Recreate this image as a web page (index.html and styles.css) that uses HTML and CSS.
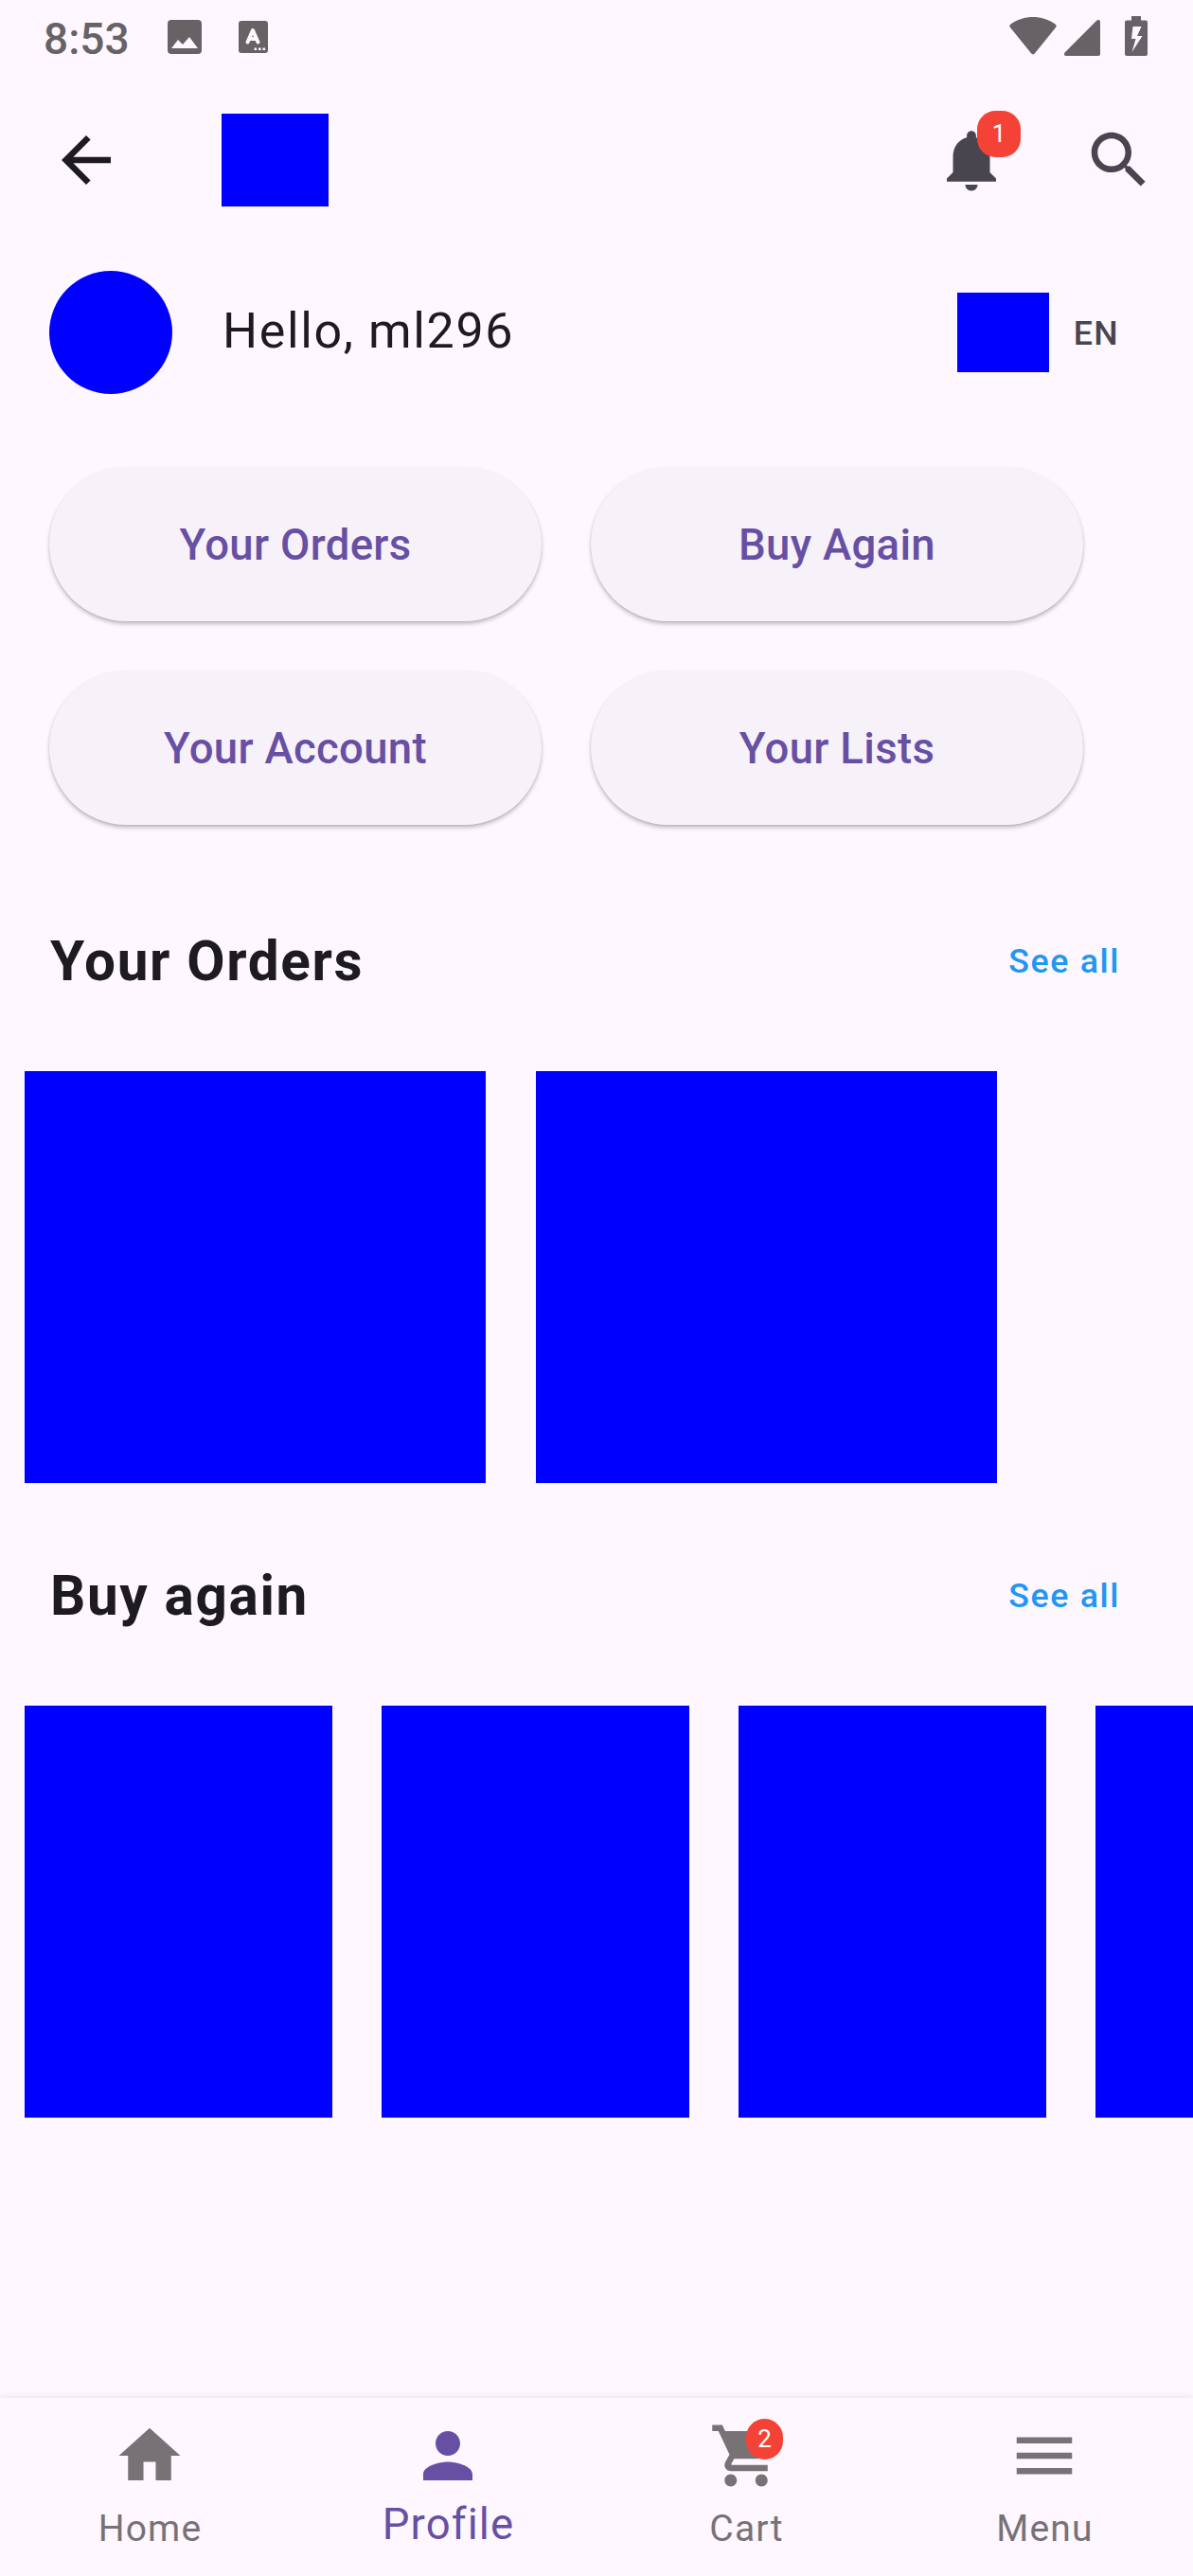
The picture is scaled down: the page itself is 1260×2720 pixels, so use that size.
FILE: index.html
```html
<!DOCTYPE html>
<html lang="en">
<head>
<meta charset="utf-8">
<title>Profile</title>
<link rel="stylesheet" href="styles.css">
</head>
<body>
<div class="status">
  <span class="clock">8:53</span>
  <svg class="st-photo" width="36" height="36" viewBox="3 3 18 18"><path fill-rule="evenodd" d="M5 3h14a2 2 0 0 1 2 2v14a2 2 0 0 1-2 2H5a2 2 0 0 1-2-2V5a2 2 0 0 1 2-2zM5 18h14l-4.500-6-3.500 4-2.500-2.500z"/></svg>
  <svg class="st-a" width="31" height="34" viewBox="0 0 31 34"><rect width="31" height="34" rx="3"/><path d="M9.500 22.500 15 10 20.500 22.500M11.500 19h7" class="a-mark"/><path d="M16.500 28.500h2.600v2.600h-2.600zM21 28.500h2.600v2.600H21zM25.500 28.500h2.600v2.600h-2.600z" class="dots"/></svg>
  <span class="grow"></span>
  <svg class="st-wifi" width="50" height="40" viewBox="0 0 50 40"><path d="M1 11Q-.7 9 1.500 7.500C15-2.500 35-2.500 48.500 7.500Q50.700 9 49 11L27 38.300Q25 40.500 23 38.300z"/></svg>
  <svg class="st-signal" width="38" height="38" viewBox="0 0 38 38"><path d="M.8 34.200 34.200.800Q38-1.500 38 2.500V36q0 2-2 2H2.500Q-1.500 38 .8 34.200z"/></svg>
  <svg class="st-battery" width="24" height="42" viewBox="0 0 24 42"><path fill-rule="evenodd" d="M7 0h10v4.500h5q2 0 2 2V40q0 2-2 2H2q-2 0-2-2V6.500q0-2 2-2h5zM8.500 11 7 24h4.500L7.500 38 18.500 21h-5.500L17.500 11z"/></svg>
</div>

<header class="appbar">
  <svg class="icon back" viewBox="0 0 24 24"><path d="M20 11H7.830l5.590-5.590L12 4l-8 8 8 8 1.410-1.410L7.830 13H20v-2z"/></svg>
  <div class="logo"></div>
  <span class="grow"></span>
  <div class="bell">
    <svg class="icon" viewBox="0 0 24 24"><path d="M12 22c1.100 0 2-.9 2-2h-4c0 1.100.89 2 2 2zm6-6v-5c0-3.070-1.640-5.640-4.500-6.320V4c0-.83-.67-1.500-1.500-1.500s-1.500.67-1.500 1.500v.68C7.630 5.360 6 7.920 6 11v5l-2 2v1h16v-1l-2-2z"/></svg>
    <span class="badge bell-badge">1</span>
  </div>
  <svg class="icon" viewBox="0 0 24 24"><path d="M15.500 14h-.79l-.28-.27C15.410 12.590 16 11.110 16 9.500 16 5.910 13.090 3 9.500 3S3 5.910 3 9.500 5.910 16 9.500 16c1.610 0 3.090-.59 4.230-1.570l.27.28v.79l5 4.990L20.490 19l-4.990-5zm-6 0C7.010 14 5 11.990 5 9.500S7.010 5 9.500 5 14 7.010 14 9.500 11.990 14 9.500 14z"/></svg>
</header>

<section class="user">
  <div class="avatar"></div>
  <div class="hello">Hello, ml296</div>
  <span class="grow"></span>
  <div class="flag"></div>
  <div class="lang">EN</div>
</section>

<div class="actions">
  <button>Your Orders</button>
  <button>Buy Again</button>
  <button>Your Account</button>
  <button>Your Lists</button>
</div>

<section class="shelf">
  <div class="shelf-head"><h2>Your Orders</h2><a>See all</a></div>
  <div class="cards"><div class="card wide"></div><div class="card wide"></div></div>
</section>
<section class="shelf">
  <div class="shelf-head"><h2>Buy again</h2><a>See all</a></div>
  <div class="cards"><div class="card"></div><div class="card"></div><div class="card"></div><div class="card"></div></div>
</section>

<nav class="tabs">
  <div class="tab"><svg class="icon" viewBox="0 0 24 24"><path d="M10 20v-6h4v6h5v-8h3L12 3 2 12h3v8z"/></svg><span class="label">Home</span></div>
  <div class="tab active"><svg class="icon" viewBox="0 0 24 24"><path d="M12 12c2.210 0 4-1.790 4-4s-1.790-4-4-4-4 1.790-4 4 1.790 4 4 4zm0 2c-2.670 0-8 1.340-8 4v2h16v-2c0-2.660-5.330-4-8-4z"/></svg><span class="label">Profile</span></div>
  <div class="tab"><svg class="icon" viewBox="0 0 24 24"><path d="M7 18c-1.100 0-1.990.9-1.990 2S5.900 22 7 22s2-.9 2-2-.9-2-2-2zM1 2v2h2l3.600 7.590-1.350 2.450c-.16.28-.25.61-.25.96 0 1.100.9 2 2 2h12v-2H7.420c-.14 0-.25-.11-.25-.25l.03-.12.9-1.630h7.450c.75 0 1.410-.41 1.750-1.030l3.580-6.490c.08-.14.12-.31.12-.48 0-.55-.45-1-1-1H5.210l-.94-2H1zm16 16c-1.100 0-1.990.9-1.990 2s.89 2 1.990 2 2-.9 2-2-.9-2-2-2z"/></svg><span class="badge cart-badge">2</span><span class="label">Cart</span></div>
  <div class="tab"><svg class="icon" viewBox="0 0 24 24"><path d="M3 18h18v-2H3v2zm0-5h18v-2H3v2zm0-7v2h18V6H3z"/></svg><span class="label">Menu</span></div>
</nav>
</body>
</html>
```

FILE: styles.css
```css
* { box-sizing: border-box; }
html, body { margin: 0; }
body {
  width: 1260px;
  height: 2720px;
  overflow: hidden;
  display: flex;
  flex-direction: column;
  background: #fef7ff;
  color: #1d1b20;
  font-family: Roboto, sans-serif;
}
svg { display: block; fill: currentColor; flex: none; }
.grow { flex: 1; }
.icon { width: 78px; height: 78px; }

.status {
  height: 78px;
  display: flex;
  align-items: center;
  padding: 0 48px 0 46px;
  color: #666266;
}
.clock { width: 131px; padding-top: 4px; font-size: 46px; line-height: 54px; font-weight: 500; }
.st-a { margin-left: 39px; }
.st-wifi { margin-top: -3px; }
.st-signal { margin: 2px 26px 0 8px; }
.st-battery { margin-top: -2px; }
.a-mark { fill: none; stroke: #fef7ff; stroke-width: 4; stroke-linecap: round; stroke-linejoin: round; }
.dots { fill: #fef7ff; }

.appbar {
  height: 182px;
  display: flex;
  align-items: center;
  padding: 0 39px 0 52px;
  color: #49454f;
}
.back { color: #1d1b20; }
.logo { width: 113px; height: 98px; margin-left: 104px; background: #00f; }
.bell { position: relative; margin-right: 78px; }
.badge {
  position: absolute;
  background: #f44336;
  color: #fff;
  font-size: 26px;
  text-align: center;
  border-radius: 19.5px;
}
.bell-badge { left: 45px; top: -13px; width: 46px; height: 49px; line-height: 49px; }

.user {
  height: 130px;
  margin-top: 26px;
  display: flex;
  align-items: center;
  padding: 0 78px 0 52px;
}
.avatar { width: 130px; height: 130px; border-radius: 50%; background: #00f; }
.hello { margin: 0 0 4px 53px; font-size: 52px; letter-spacing: 1.625px; white-space: nowrap; }
.flag { width: 97px; height: 84px; background: #00f; }
.lang { margin: 2px 0 0 26px; color: #49454f; font-size: 35.75px; font-weight: 500; letter-spacing: 1.3px; }

.actions {
  display: grid;
  grid-template-columns: 520px 520px;
  grid-auto-rows: 163px;
  gap: 52px;
  margin: 77px 0 0 52px;
}
.actions button {
  border: 0;
  padding: 3px 0 0;
  border-radius: 82px;
  background: #f7f2fa;
  color: #6750a4;
  font: 500 45.5px/64px Roboto, sans-serif;
  letter-spacing: .325px;
  box-shadow: 0 3px 4px rgba(0,0,0,.22), 0 1px 2px rgba(0,0,0,.1);
}

.shelf { height: 670px; }
.actions + .shelf { margin-top: 92px; }
.shelf-head {
  height: 104px;
  display: flex;
  align-items: center;
  justify-content: space-between;
  padding: 0 77px 0 53px;
}
.shelf-head h2 { margin: 0; font-size: 58.5px; font-weight: 700; letter-spacing: 1.625px; }
.shelf-head a { color: #2196f3; font-size: 35.75px; font-weight: 500; letter-spacing: 1.625px; }
.cards { display: flex; gap: 52px; padding: 64px 0 0 26px; overflow: hidden; }
.card { flex: none; width: 325px; height: 435px; background: #00f; }
.wide { width: 487px; margin-right: 1px; }

.tabs {
  height: 188px;
  margin-top: auto;
  display: flex;
  background: #fef7ff;
  color: #787276;
  box-shadow: 0 -2px 6px rgba(0,0,0,.07);
}
.tab {
  position: relative;
  flex: 1;
  display: flex;
  flex-direction: column;
  align-items: center;
  padding-top: 22px;
}
.label { margin: 15px 0 0 2px; font-size: 39px; line-height: 46px; letter-spacing: 1.2px; }
.active { color: #6750a4; }
.active .label { margin-top: 7px; font-size: 45.5px; line-height: 54px; letter-spacing: 1.1px; }
.cart-badge { left: 158px; top: 22px; width: 39px; height: 43px; line-height: 43px; }
```
